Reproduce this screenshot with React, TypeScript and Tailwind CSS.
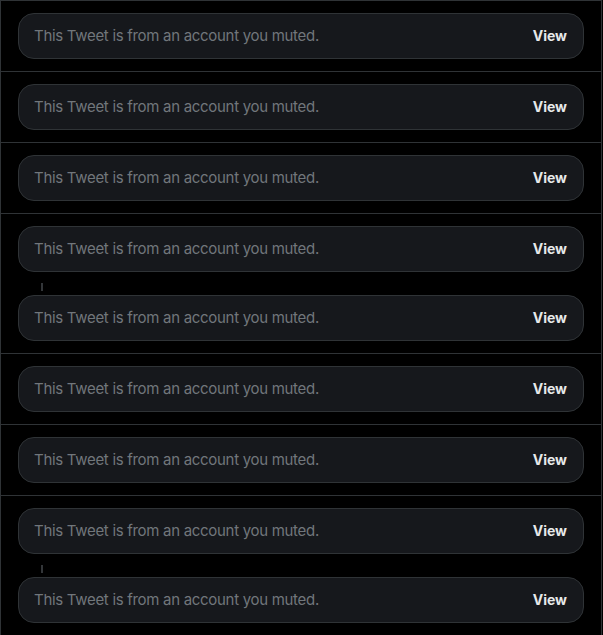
import React from "react";

const rows = [
  { thread: false },
  { thread: false },
  { thread: false },
  { thread: true },
  { thread: false },
  { thread: false },
  { thread: true },
];

function MutedBox() {
  return (
    <div className="flex h-[46px] items-center justify-between rounded-2xl border border-[#2f3336] bg-[#16181c] pl-[15px] pr-[16px]">
      <span className="text-[15px] tracking-[-0.02em] text-[#71767b]">
        This Tweet is from an account you muted.
      </span>
      <button className="pb-[2px] text-[14px] font-bold text-[#e7e9ea]">View</button>
    </div>
  );
}

export default function App() {
  return (
    <div className="min-h-screen bg-black" style={{ fontFamily: "Inter, 'Noto Sans', sans-serif" }}>
      <div className="w-[602px] border-x border-t border-[#2f3336]">
        {rows.map((row, i) => (
          <div
            key={i}
            className={`px-[17px] ${i < rows.length - 1 ? "border-b border-[#2f3336]" : ""} ${row.thread ? "pt-3 pb-0" : "py-3"}`}
          >
            <MutedBox />
            {row.thread && (
              <>
                <div className="h-[23px] pl-[23px] pt-[11px]">
                  <div className="h-2 w-[2px] bg-[#333639]" />
                </div>
                <MutedBox />
                <div className="h-3" />
              </>
            )}
          </div>
        ))}
      </div>
    </div>
  );
}
